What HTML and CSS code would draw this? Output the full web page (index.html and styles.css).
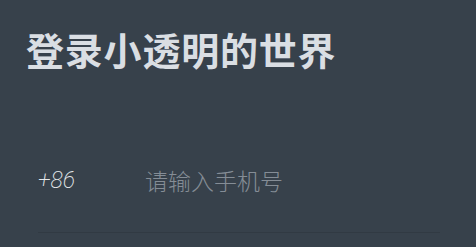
FILE: index.html
```html
<!DOCTYPE html>
<html lang="zh">
<head>
<meta charset="utf-8">
<link rel="stylesheet" href="styles.css">
</head>
<body>
<div class="page">
  <h1 class="title">登录小透明的世界</h1>
  <div class="phone-row">
    <span class="code">+86</span>
    <span class="placeholder">请输入手机号</span>
  </div>
</div>
</body>
</html>
```
FILE: styles.css
```css
html, body {
  margin: 0;
  padding: 0;
  background: #37414b;
}
.page {
  width: 476px;
  height: 247px;
  box-sizing: border-box;
  padding: 24px 36px 0 26px;
  font-family: "Noto Sans CJK SC", "Noto Sans", sans-serif;
}
.title {
  margin: 0;
  font-size: 38px;
  line-height: 50px;
  font-weight: 700;
  color: #dadee3;
  letter-spacing: 0.8px;
}
.phone-row {
  margin-left: 12px;
  margin-top: 86px;
  display: flex;
  align-items: center;
  height: 40px;
  padding-bottom: 32px;
  border-bottom: 1px solid #313a43;
}
.code {
  width: 107px;
  font-family: Roboto, "Noto Sans", sans-serif;
  font-style: italic;
  font-weight: 200;
  font-size: 23px;
  color: #e6e9ec;
}
.placeholder {
  font-size: 23px;
  font-weight: 300;
  color: #858d96;
}
```
